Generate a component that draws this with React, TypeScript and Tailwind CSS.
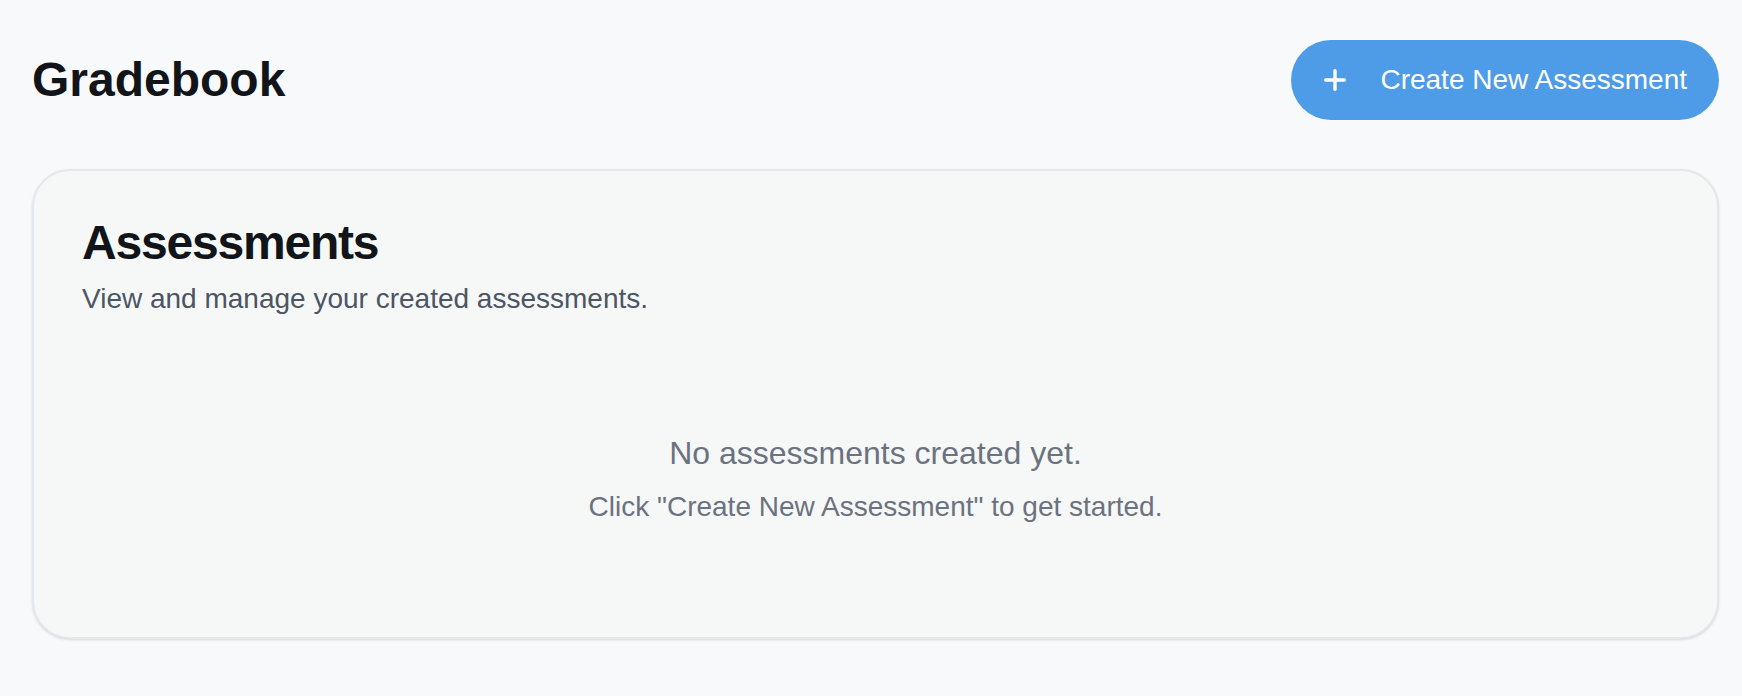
import React from 'react';

const PlusIcon = () => (
  <svg viewBox="0 0 22 22" className="w-[22px] h-[22px] shrink-0" fill="none" stroke="currentColor" strokeWidth={3.4} strokeLinecap="round">
    <path d="M11 1.7V20.3" />
    <path d="M1.7 11H20.3" />
  </svg>
);

export default function App() {
  return (
    <div className="min-h-screen w-full bg-[#f8f9fb] pl-8 pr-[23px] pt-10 pb-10 font-['Liberation_Sans',Arial,sans-serif]">
      {/* Header */}
      <div className="flex items-center justify-between">
        <h1 className="text-[48px] leading-[64px] font-bold text-[#111418]">Gradebook</h1>
        <button className="flex items-center gap-[34px] h-20 pl-[33px] pr-8 rounded-full bg-[#4e9be8] text-white text-[28px] leading-[40px]">
          <PlusIcon />
          Create New Assessment
        </button>
      </div>

      {/* Assessments card */}
      <div className="mt-[49px] rounded-[38px] border-2 border-[#e3e8ec] bg-[#f6f8f7] shadow-sm">
        <div className="p-12 flex flex-col gap-3">
          <h2 className="text-[48px] leading-none font-bold tracking-tight text-[#111418]">Assessments</h2>
          <p className="text-[28px] leading-[40px] text-[#4b5563]">View and manage your created assessments.</p>
        </div>
        <div className="px-12 pb-12">
          <div className="py-[62px] flex flex-col items-center text-center">
            <p className="text-[32px] leading-[48px] text-[#6b7280]">No assessments created yet.</p>
            <p className="mt-[10px] text-[28px] leading-[40px] text-[#6b7280]">Click "Create New Assessment" to get started.</p>
          </div>
        </div>
      </div>
    </div>
  );
}
